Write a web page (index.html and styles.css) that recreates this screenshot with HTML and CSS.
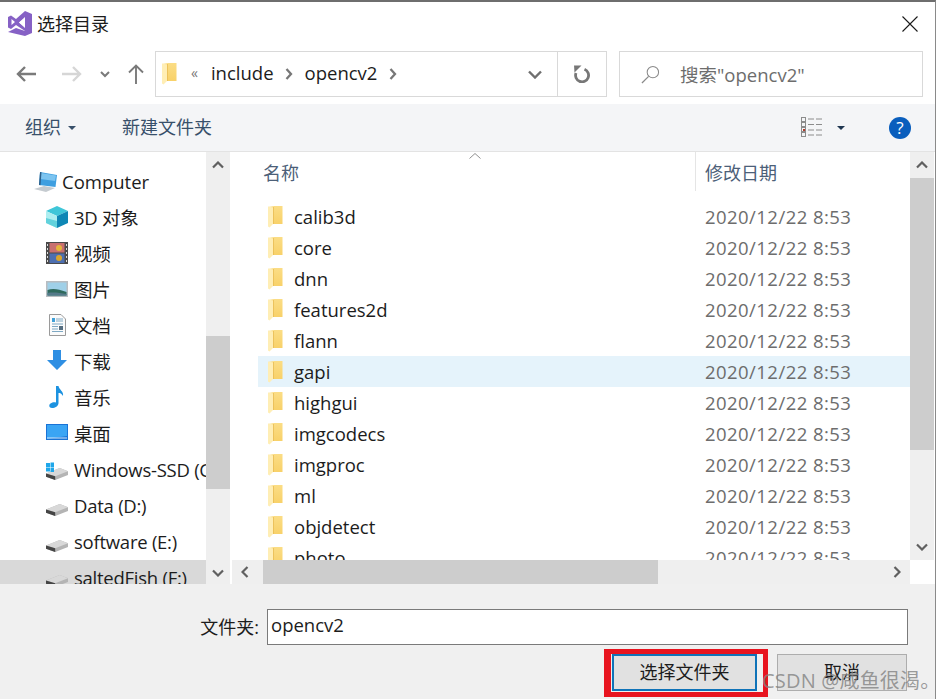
FILE: index.html
```html
<!DOCTYPE html>
<html lang="zh">
<head>
<meta charset="utf-8">
<title>选择目录</title>
<link rel="stylesheet" href="styles.css">
</head>
<body>
<svg class="defs" width="0" height="0" aria-hidden="true">
  <defs>
    <linearGradient id="fg" x1="0" y1="0" x2="0" y2="1">
      <stop offset="0" stop-color="#fbdd85"/><stop offset="1" stop-color="#f8d169"/>
    </linearGradient>
    <symbol id="folder" viewBox="0 0 15 22">
      <path d="M0 1 L6 0 L14.500 0 L14.500 18 L5 18 Z" fill="url(#fg)"/>
      <path d="M5 1 L5.800 1 L5.800 18 L5 18 Z" fill="#e9bd55"/>
      <path d="M0 .5 L5 1.500 L5 18 L1.500 21.500 L0 20.500 Z" fill="#ffeeb5"/>
    </symbol>
    <symbol id="drive" viewBox="0 0 24 13">
      <path d="M0 6 L15 0 L24 3.500 L24 7.500 L10 13 L0 9.500 Z" fill="#b4b4b4"/>
      <path d="M0 6 L15 0 L24 3.500 L10 9 Z" fill="#d8d8d8"/>
      <path d="M0 6 L10 9 L10 13 L0 9.500 Z" fill="#454545"/>
    </symbol>
  </defs>
</svg>
<div class="window">
  <header class="titlebar">
    <svg class="vs" viewBox="0 0 24 25"><path d="M17 0 L24 3 L24 22 L17 25 L0 21 L8 17 L17 20 Z" fill="#8661c5"/><path d="M0 6 L3 4.500 L8 8 L17 0 L17 6 L11 11.500 L17 17 L17 20 L8 14 L3 18 L0 16.500 Z" fill="#8661c5"/><path d="M3.500 8 L3.500 14 L7 11 Z M11 11.500 L17 7 L17 16 Z" fill="#fff"/></svg>
    <span class="title">选择目录</span>
    <svg class="close" viewBox="0 0 16 16"><path d="M.5.5 15.500 15.500M15.500.5.5 15.500" stroke="#1a1a1a" stroke-width="1.100" fill="none"/></svg>
  </header>

  <nav class="navbar">
    <svg class="nav-back" viewBox="0 0 20 16"><path d="M9 1 2 8l7 7M2 8h18" stroke="#7a7a7a" stroke-width="2.400" fill="none"/></svg>
    <svg class="nav-fwd" viewBox="0 0 20 16"><path d="M11 1l7 7-7 7M18 8H0" stroke="#d6d6d6" stroke-width="2.400" fill="none"/></svg>
    <svg class="nav-down" viewBox="0 0 10 7"><path d="M1 1l4 4 4-4" stroke="#7a7a7a" stroke-width="2" fill="none"/></svg>
    <svg class="nav-up" viewBox="0 0 16 20"><path d="M1 8.500 8 1.500l7 7M8 2v18" stroke="#7a7a7a" stroke-width="1.900" fill="none"/></svg>
    <div class="address">
      <svg class="addr-folder"><use href="#folder"/></svg>
      <span class="addr-more">«</span>
      <span class="crumb">include</span>
      <svg class="chev" viewBox="0 0 8 12"><path d="M1.500 1 6 6l-4.500 5" stroke="#777" stroke-width="2.300" fill="none"/></svg>
      <span class="crumb">opencv2</span>
      <svg class="chev" viewBox="0 0 8 12"><path d="M1.500 1 6 6l-4.500 5" stroke="#777" stroke-width="2.300" fill="none"/></svg>
      <svg class="addr-drop" viewBox="0 0 14 9"><path d="M1 1.500l6 6 6-6" stroke="#6f6f6f" stroke-width="2.400" fill="none"/></svg>
      <div class="refresh">
        <svg viewBox="0 0 18 18"><path d="M11.500 4.300A6.500 6.500 0 1 1 3 8" stroke="#777" stroke-width="2.800" fill="none"/><path d="M1 .5 8.500 .5 1.500 7.500Z" fill="#777"/></svg>
      </div>
    </div>
    <div class="search">
      <svg viewBox="0 0 20 20"><circle cx="12.500" cy="7.500" r="6" stroke="#8a8a8a" fill="none" stroke-width="1.100"/><path d="M8 12 1 19" stroke="#8a8a8a" stroke-width="1.300"/></svg>
      <span>搜索"opencv2"</span>
    </div>
  </nav>

  <div class="toolbar">
    <span class="tool">组织</span><i class="caret"></i>
    <span class="tool new">新建文件夹</span>
    <svg class="views" viewBox="0 0 22 21">
      <g fill="none" stroke="#8c8c8c"><rect x=".5" y=".5" width="4" height="4"/><rect x=".5" y="5.500" width="4" height="4"/><rect x=".5" y="10.500" width="4" height="4"/><rect x=".5" y="15.500" width="4" height="4"/></g>
      <rect x="2" y="12" width="2" height="2" fill="#b23a2a"/>
      <path d="M7 2h6M15 2h6M7 7.500h6M15 7.500h6M7 13h6M15 13h6M7 18h6M15 18h6" stroke="#8c8c8c"/>
    </svg>
    <i class="caret dark"></i>
    <span class="help">?</span>
  </div>

  <main class="main">
    <aside class="sidebar">
      <ul class="tree">
        <li class="root"><svg class="ico-pc" viewBox="0 0 24 21"><path d="M6 1 23 4 21.500 16 5 14Z" fill="#3f9fe0"/><path d="M7 2 22 4.500 21 10 6.500 8Z" fill="#7cc4f0"/><path d="M6 1 7.500 1.300 6.500 14.200 5 14Z" fill="#2c5f8a"/><path d="M0 18 10 15 21 17 12 21Z" fill="#c5cbd0"/></svg><span>Computer</span></li>
        <li><svg class="ico" viewBox="0 0 22 22"><path d="M11 0 22 5 11 10 0 5Z" fill="#3fc6d8"/><path d="M0 5 11 10V22L0 17Z" fill="#aeeef0"/><path d="M0 12 11 15V22L0 17Z" fill="#62d2dc"/><path d="M22 5 11 10V22L22 17Z" fill="#0f87b5"/></svg><span>3D 对象</span></li>
        <li><svg class="ico" viewBox="0 0 22 22"><rect width="22" height="22" fill="#4a4a4a"/><rect x="3.500" y="1" width="15" height="9.500" fill="#c9706f"/><rect x="3.500" y="11.500" width="15" height="9.500" fill="#4d6fb0"/><circle cx="13" cy="6" r="3" fill="#e5b53b"/><circle cx="13" cy="16" r="3" fill="#d9a52c"/><path d="M1 2h1v2H1zM1 6h1v2H1zM1 10h1v2H1zM1 14h1v2H1zM1 18h1v2H1zM20 2h1v2h-1zM20 6h1v2h-1zM20 10h1v2h-1zM20 14h1v2h-1zM20 18h1v2h-1z" fill="#ddd"/></svg><span>视频</span></li>
        <li><svg class="ico" viewBox="0 0 22 22"><rect y="3" width="22" height="16" fill="#b9bdc1"/><rect x="1.500" y="4.500" width="19" height="13" fill="#9fd0e8"/><path d="M1.500 12C7 10 12 11 20.500 14V17.500H1.500Z" fill="#2f6a5d"/><path d="M1.500 15C7 14 14 15 20.500 16V17.500H1.500Z" fill="#557a8a"/></svg><span>图片</span></li>
        <li><svg class="ico" viewBox="0 0 22 22"><path d="M3.500.5H15L19.500 5V21.500H3.500Z" fill="#fbfbfb" stroke="#9a9a9a"/><path d="M6 4h3v4H6z" fill="#3fa0d8"/><path d="M10 5h7M10 7h7M6 10h11M6 12.500h6M6 15h6M6 17.500h11" stroke="#7fa9c4"/><rect x="13" y="12" width="4" height="4" fill="#546d80"/></svg><span>文档</span></li>
        <li><svg class="ico" viewBox="0 0 22 22"><path d="M7 0H15V10H21L11 20 1 10H7Z" fill="#2f8fe3"/></svg><span>下载</span></li>
        <li><svg class="ico" viewBox="0 0 22 22"><path d="M10 0H12.500C13 4 18 5 17 10 15.500 7.500 14 7 12.500 7V17C12.500 20 9 22 6 22 3 22 2.500 19 4.500 17.500 6.500 16 8.500 16 10 16.500Z" fill="#1c92e0"/></svg><span>音乐</span></li>
        <li><svg class="ico" viewBox="0 0 22 22"><rect y="2" width="22" height="16" fill="#1a73d6"/><path d="M1 3H21V14L1 17Z" fill="#3aa5f4"/><rect x="1" y="15.500" width="20" height="1" fill="#cfe8fb"/></svg><span>桌面</span></li>
        <li><svg class="ico" viewBox="0 0 22 22"><use href="#drive" y="10" width="22" height="12"/><path d="M0 5h4v4H0zM4.500 4.500H8V9H4.500zM0 9.500h4v4H0zM4.500 9.500H8V14H4.500z" fill="#1fa7ea"/></svg><span>Windows-SSD (C:)</span></li>
        <li><svg class="ico" viewBox="0 0 22 22"><use href="#drive" y="10" width="22" height="12"/></svg><span>Data (D:)</span></li>
        <li><svg class="ico" viewBox="0 0 22 22"><use href="#drive" y="10" width="22" height="12"/></svg><span>software (E:)</span></li>
        <li class="selected"><svg class="ico" viewBox="0 0 22 22"><use href="#drive" y="10" width="22" height="12"/></svg><span>saltedFish (F:)</span></li>
      </ul>
    </aside>
    <div class="vscroll side-scroll">
      <svg viewBox="0 0 12 8" class="arrow"><path d="M1 6.500l5-5 5 5" stroke="#606060" stroke-width="2.200" fill="none"/></svg>
      <div class="track"><div class="thumb side-thumb"></div></div>
      <svg viewBox="0 0 12 8" class="arrow"><path d="M1 1.500l5 5 5-5" stroke="#606060" stroke-width="2.200" fill="none"/></svg>
    </div>

    <section class="content">
      <div class="upper">
        <div class="listpane">
          <div class="thead">
            <span class="th name">名称</span>
            <svg class="sort" viewBox="0 0 12 6"><path d="M.5 5.500 6 .5l5.500 5" stroke="#8f8f8f" fill="none"/></svg>
            <span class="th date">修改日期</span>
          </div>
          <ul class="rows">
            <li><svg class="fld"><use href="#folder"/></svg><span class="fname">calib3d</span><span class="fdate">2020/12/22 8:53</span></li>
            <li><svg class="fld"><use href="#folder"/></svg><span class="fname">core</span><span class="fdate">2020/12/22 8:53</span></li>
            <li><svg class="fld"><use href="#folder"/></svg><span class="fname">dnn</span><span class="fdate">2020/12/22 8:53</span></li>
            <li><svg class="fld"><use href="#folder"/></svg><span class="fname">features2d</span><span class="fdate">2020/12/22 8:53</span></li>
            <li><svg class="fld"><use href="#folder"/></svg><span class="fname">flann</span><span class="fdate">2020/12/22 8:53</span></li>
            <li class="hover"><svg class="fld"><use href="#folder"/></svg><span class="fname">gapi</span><span class="fdate">2020/12/22 8:53</span></li>
            <li><svg class="fld"><use href="#folder"/></svg><span class="fname">highgui</span><span class="fdate">2020/12/22 8:53</span></li>
            <li><svg class="fld"><use href="#folder"/></svg><span class="fname">imgcodecs</span><span class="fdate">2020/12/22 8:53</span></li>
            <li><svg class="fld"><use href="#folder"/></svg><span class="fname">imgproc</span><span class="fdate">2020/12/22 8:53</span></li>
            <li><svg class="fld"><use href="#folder"/></svg><span class="fname">ml</span><span class="fdate">2020/12/22 8:53</span></li>
            <li><svg class="fld"><use href="#folder"/></svg><span class="fname">objdetect</span><span class="fdate">2020/12/22 8:53</span></li>
            <li><svg class="fld"><use href="#folder"/></svg><span class="fname">photo</span><span class="fdate">2020/12/22 8:53</span></li>
          </ul>
        </div>
        <div class="vscroll list-scroll">
          <svg viewBox="0 0 12 8" class="arrow"><path d="M1 6.500l5-5 5 5" stroke="#606060" stroke-width="2.200" fill="none"/></svg>
          <div class="track"><div class="thumb list-thumb"></div></div>
          <svg viewBox="0 0 12 8" class="arrow"><path d="M1 1.500l5 5 5-5" stroke="#606060" stroke-width="2.200" fill="none"/></svg>
        </div>
      </div>
      <div class="hscroll">
        <svg viewBox="0 0 8 12" class="harrow"><path d="M6.500 1l-5 5 5 5" stroke="#606060" stroke-width="2.200" fill="none"/></svg>
        <div class="htrack"><div class="hthumb"></div></div>
        <svg viewBox="0 0 8 12" class="harrow"><path d="M1.500 1l5 5-5 5" stroke="#606060" stroke-width="2.200" fill="none"/></svg>
      </div>
    </section>
  </main>

  <footer class="footer">
    <div class="field">
      <label class="flabel" for="dir">文件夹:</label>
      <input id="dir" class="finput" type="text" value="opencv2">
    </div>
    <div class="actions">
      <button class="btn primary">选择文件夹</button>
      <button class="btn">取消</button>
    </div>
    <div class="annot"></div>
    <div class="watermark">CSDN @咸鱼很渴。</div>
  </footer>
</div>
</body>
</html>
```

FILE: styles.css
```css
* { box-sizing: border-box; }
html, body { margin: 0; padding: 0; height: 699px; overflow: hidden; background: #fff; }
body, input, button {
  font-family: "Open Sans", "Noto Sans CJK SC", sans-serif;
  font-size: 18.500px;
  color: #1c1c1c;
}
ul { list-style: none; margin: 0; padding: 0; }
.defs { position: absolute; }
svg { display: block; flex: none; }

.window { display: flex; flex-direction: column; height: 699px; border-top: 2px solid #6e6e6e; border-right: 1px solid #8a8a8a; }

.titlebar { display: flex; align-items: center; height: 44px; flex: none; padding: 0 17px 1px 8px; }
.vs { width: 24px; height: 25px; margin-right: 5px; }
.title { font-size: 18px; line-height: 42px; }
.close { width: 16px; height: 16px; margin-left: auto; }

.navbar { display: flex; align-items: center; height: 58px; flex: none; padding: 5px 0 7px 16px; }
.nav-back { width: 20px; height: 16px; }
.nav-fwd { width: 20px; height: 16px; margin-left: 26px; }
.nav-down { width: 10px; height: 7px; margin-left: 18px; }
.nav-up { width: 16px; height: 20px; margin-left: 18px; }

.address { display: flex; align-items: center; width: 452px; height: 46px; margin-left: 11px; border: 1px solid #d9d9d9; padding-left: 6px; }
.addr-folder { width: 15px; height: 22px; }
.addr-more { font-size: 14px; color: #777; margin: 0 13px 3px 14px; }
.crumb { line-height: 44px; padding-bottom: 2px; }
.chev { width: 8px; height: 12px; margin: 0 11.500px; }
.addr-drop { width: 14px; height: 9px; margin-left: auto; margin-right: 15px; }
.refresh { display: flex; align-items: center; justify-content: center; width: 49px; height: 44px; border-left: 1px solid #d9d9d9; }
.refresh svg { width: 18px; height: 18px; }

.search { display: flex; align-items: center; width: 304px; height: 46px; margin-left: 12px; border: 1px solid #d9d9d9; padding-left: 21px; color: #6d6d6d; }
.search svg { width: 19px; height: 19px; margin-right: 20px; }

.toolbar { display: flex; align-items: center; height: 48px; flex: none; background: #f4f5f7; border-bottom: 1px solid #e3e3e3; padding: 0 24px 0 25px; color: #334d66; }
.tool { font-size: 18px; color: #38506a; margin-bottom: 3px; }
.new { margin-left: 46px; }
.caret { width: 0; height: 0; border-left: 4px solid transparent; border-right: 4px solid transparent; border-top: 4px solid #38506a; margin-left: 7px; }
.views { width: 22px; height: 21px; margin-left: auto; }
.caret.dark { margin-left: 14px; border-top-color: #1f3650; }
.help { display: flex; align-items: center; justify-content: center; width: 22px; height: 22px; margin-left: 44px; border-radius: 50%; background: #0a5ebd; color: #fff; font-size: 17px; line-height: 1; }

.main { display: flex; height: 432px; flex: none; }
.sidebar { width: 206px; flex: none; overflow: hidden; }
.tree { padding-top: 11px; }
.tree li { display: flex; align-items: center; height: 36px; padding-left: 46px; white-space: nowrap; overflow: hidden; letter-spacing: -.25px; }
.tree .root { padding-left: 34px; letter-spacing: 0; }
.ico-pc { width: 24px; height: 21px; margin-right: 4px; }
.ico { width: 22px; height: 22px; margin-right: 6px; }
.tree .selected { background: #d9d9d9; height: 24px; margin-top: 1px; align-items: flex-start; padding-top: 5px; }

.vscroll { display: flex; flex-direction: column; align-items: center; background: #efefef; flex: none; }
.side-scroll { width: 24px; padding-top: 9px; padding-bottom: 7px; margin-right: 2px; }
.list-scroll { width: 24px; padding-top: 9px; padding-bottom: 9px; margin-right: 1px; }
.arrow { width: 12px; height: 8px; }
.track { flex: 1; width: 100%; }
.thumb { background: #cdcdcd; width: 100%; }
.side-thumb { height: 153px; margin-top: 167px; }
.list-thumb { height: 272px; margin-top: 9px; }

.content { flex: 1; min-width: 0; display: flex; flex-direction: column; }
.upper { display: flex; height: 408px; flex: none; }
.listpane { flex: 1; min-width: 0; overflow: hidden; padding-left: 26px; }
.thead { display: flex; align-items: center; height: 39px; margin-left: -26px; padding-left: 31px; position: relative; }
.th { font-size: 18px; color: #4c6078; }
.date { position: absolute; left: 463px; top: 0; bottom: 0; border-left: 1px solid #e5e5e5; padding-left: 9px; display: flex; align-items: center; }
.sort { width: 12px; height: 6px; position: absolute; left: 237px; top: 1px; }
.rows { padding-top: 10px; }
.rows li { display: flex; align-items: center; height: 31px; padding-left: 10px; }
.rows .hover { background: #e5f3fb; }
.fld { width: 15px; height: 22px; margin-right: 11px; }
.fname { width: 411px; }
.fdate { color: #6d6d6d; letter-spacing: .45px; }

.hscroll { display: flex; align-items: center; height: 24px; background: #efefef; width: 678px; padding: 0 9px; gap: 0; }
.harrow { width: 8px; height: 12px; }
.htrack { flex: 1; height: 100%; padding-left: 14px; }
.hthumb { width: 395px; height: 100%; background: #cdcdcd; }

.footer { flex: 1; background: #f0f0f0; position: relative; display: flex; flex-direction: column; padding-top: 25px; }
.field { display: flex; align-items: center; justify-content: flex-end; padding-right: 27px; }
.flabel { margin-right: 8px; font-size: 18px; padding-bottom: 2px; }
.finput { width: 641px; height: 36px; border: 1px solid #7a7a7a; padding: 0 3px 5px; background: #fff; outline: none; }
.actions { display: flex; justify-content: flex-end; gap: 20px; margin-top: 9px; padding-right: 28px; }
.btn { width: 130px; height: 37px; border: 1px solid #adadad; background: #e1e1e1; padding: 0 0 3px; font-size: 18px; }
.btn.primary { width: 145px; border: 2px solid #0f73b8; }
.annot { position: absolute; left: 604px; top: 65px; width: 164px; height: 48px; border: 5px solid #e8141f; border-left-width: 7px; }
.watermark { position: absolute; left: 762px; top: 81px; font-size: 20px; white-space: nowrap; color: rgba(130,130,130,.8); letter-spacing: .2px; }
```
